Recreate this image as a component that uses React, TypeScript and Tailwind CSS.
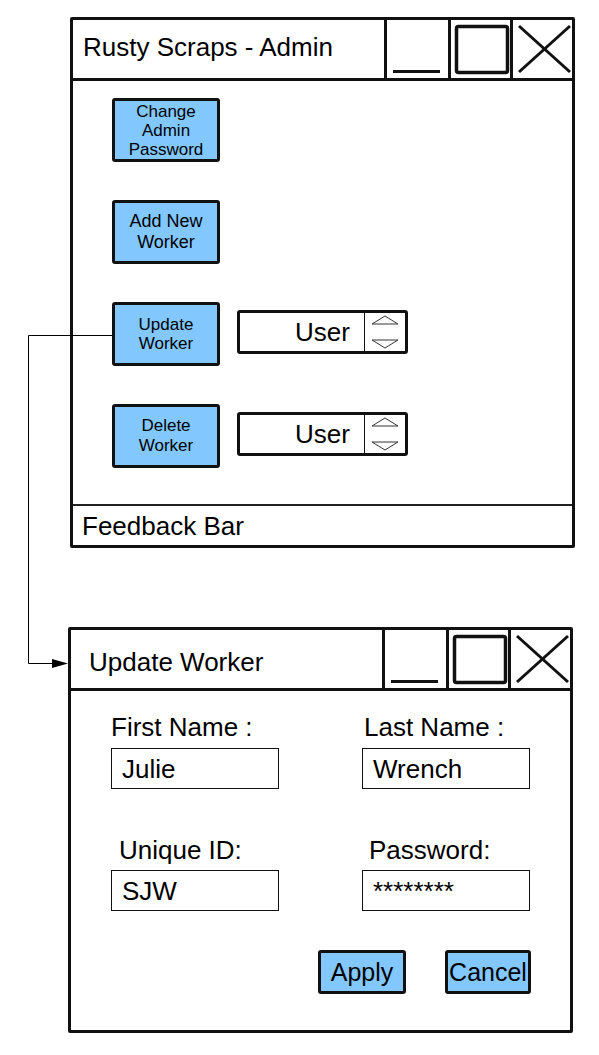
import React from "react";

const FONT = { fontFamily: '"Liberation Sans", Arial, sans-serif' };

function WindowControls() {
  return (
    <>
      {/* Minimize */}
      <div className="w-[64px] h-full border-l-[3px] border-[#111]">
        <svg width="61" height="58" viewBox="0 0 61 58">
          <line x1="6" y1="51.5" x2="53" y2="51.5" stroke="#111" strokeWidth={3} />
        </svg>
      </div>
      {/* Maximize */}
      <div className="w-[62px] h-full border-l-[3px] border-[#111]">
        <svg width="59" height="58" viewBox="0 0 59 58">
          <rect x="5.5" y="6.5" width="51" height="46" rx="2" fill="none" stroke="#111" strokeWidth={3.5} />
        </svg>
      </div>
      {/* Close */}
      <div className="w-[62px] h-full border-l-[3px] border-[#111]">
        <svg width="59" height="58" viewBox="0 0 59 58">
          <line x1="6" y1="6" x2="57" y2="52" stroke="#111" strokeWidth={3} />
          <line x1="57" y1="6" x2="6" y2="52" stroke="#111" strokeWidth={3} />
        </svg>
      </div>
    </>
  );
}

function TitleBar({ title, padClass }: { title: string; padClass: string }) {
  return (
    <div className="flex h-[61px] border-b-[3px] border-[#111]">
      <div className={`flex flex-1 items-center ${padClass} text-[26px] leading-none text-black`}>
        {title}
      </div>
      <WindowControls />
    </div>
  );
}

function BlueButton({
  children,
  className,
}: {
  children: React.ReactNode;
  className: string;
}) {
  return (
    <div
      className={`flex items-center justify-center rounded-[3px] border-[3px] border-[#111] bg-[#82c8ff] text-center text-black whitespace-nowrap ${className}`}
    >
      {children}
    </div>
  );
}

function Spinner() {
  return (
    <div className="mb-[5px] flex h-[44px] w-[171px] rounded-[3px] border-[3px] border-[#111] bg-white">
      <div className="flex w-[124px] items-center justify-end pr-[14px] text-[26px] leading-none">
        User
      </div>
      <div className="flex-1 border-l border-[#111]">
        <svg width="40" height="38" viewBox="0 0 40 38">
          <polyline points="7,11 20,3 33,11" fill="none" stroke="#333" strokeWidth={1} />
          <line x1="7" y1="11" x2="33" y2="11" stroke="#333" strokeWidth={1} />
          <line x1="7" y1="27" x2="33" y2="27" stroke="#333" strokeWidth={1} />
          <polyline points="7,27 20,35 33,27" fill="none" stroke="#333" strokeWidth={1} />
        </svg>
      </div>
    </div>
  );
}

function Field({
  label,
  value,
  labelPad,
  gapClass,
}: {
  label: string;
  value: string;
  labelPad: string;
  gapClass: string;
}) {
  return (
    <div className="w-[168px]">
      <div className={`${labelPad} text-[26px] leading-[28px] whitespace-nowrap`}>{label}</div>
      <div
        className={`${gapClass} flex h-[41px] items-center border border-[#111] pl-[10px] text-[26px] leading-none`}
      >
        {value}
      </div>
    </div>
  );
}

export default function App() {
  return (
    <div className="relative h-[1055px] w-[599px] overflow-hidden bg-white text-black" style={FONT}>
      {/* Admin window */}
      <div className="ml-[70px] mt-[17px] flex h-[531px] w-[505px] flex-col rounded-[2px] border-[3px] border-[#111]">
        <TitleBar title="Rusty Scraps - Admin" padClass="pl-[10px] pb-[4px]" />
        <div className="flex h-[423px] flex-col gap-[38px] pl-[39px] pt-[17px]">
          <BlueButton className="h-[64px] w-[108px] flex-col text-[17px] leading-[19px]">
            <span>Change</span>
            <span>Admin</span>
            <span>Password</span>
          </BlueButton>
          <BlueButton className="h-[64px] w-[108px] flex-col text-[18px] leading-[21px]">
            <span>Add New</span>
            <span>Worker</span>
          </BlueButton>
          <div className="flex items-center gap-[17px]">
            <BlueButton className="h-[64px] w-[108px] flex-col text-[17px] leading-[19px]">
              <span>Update</span>
              <span>Worker</span>
            </BlueButton>
            <Spinner />
          </div>
          <div className="flex items-center gap-[17px]">
            <BlueButton className="h-[64px] w-[108px] flex-col text-[17px] leading-[20px]">
              <span>Delete</span>
              <span>Worker</span>
            </BlueButton>
            <Spinner />
          </div>
        </div>
        <div className="flex h-[41px] items-center border-t-2 border-[#222] pl-[9px] text-[26px] leading-none">
          Feedback Bar
        </div>
      </div>

      {/* Update Worker window */}
      <div className="ml-[68px] mt-[79px] flex h-[406px] w-[505px] flex-col rounded-[2px] border-[3px] border-[#111]">
        <TitleBar title="Update Worker" padClass="pl-[18px] pt-[5px]" />
        <div className="h-[339px] pl-[40px] pt-[22px]">
          <div className="flex gap-[83px]">
            <Field label="First Name :" value="Julie" labelPad="pl-0" gapClass="mt-[7px]" />
            <Field label="Last Name :" value="Wrench" labelPad="pl-[2px]" gapClass="mt-[7px]" />
          </div>
          <div className="mt-[47px] flex gap-[83px]">
            <Field label="Unique ID:" value="SJW" labelPad="pl-[8px]" gapClass="mt-[6px]" />
            <Field label="Password:" value="********" labelPad="pl-[7px]" gapClass="mt-[6px]" />
          </div>
          <div className="mt-[39px] flex w-[420px] justify-end gap-[39px]">
            <BlueButton className="h-[44px] w-[88px] text-[25px] leading-none">Apply</BlueButton>
            <BlueButton className="h-[44px] w-[86px] text-[25px] leading-none">Cancel</BlueButton>
          </div>
        </div>
      </div>

      {/* Connector arrow */}
      <svg
        className="pointer-events-none absolute left-0 top-0"
        width="599"
        height="1055"
        viewBox="0 0 599 1055"
      >
        <path d="M112 335.5 H28.5 V663.5 H54" fill="none" stroke="#000" strokeWidth={1} />
        <polygon points="52,659 68,663.5 52,668" fill="#000" />
      </svg>
    </div>
  );
}
